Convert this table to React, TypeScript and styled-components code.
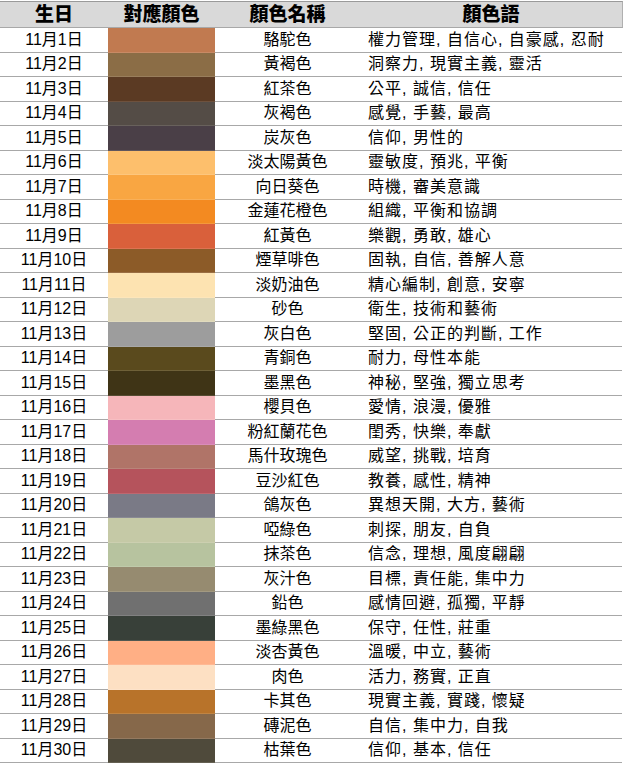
import React from "react";
import styled, { createGlobalStyle } from "styled-components";

const Global = createGlobalStyle`
  html, body { margin: 0; padding: 0; background: #ffffff; }
  body { font-family: "Liberation Sans", "Noto Sans CJK TC", sans-serif; color: #000; }
`;

type Row = { day: number; color: string; name: string; words: string };

const rows: Row[] = [
  { day: 1, color: "#c17a50", name: "駱駝色", words: "權力管理, 自信心, 自豪感, 忍耐" },
  { day: 2, color: "#8b6d46", name: "黃褐色", words: "洞察力, 現實主義, 靈活" },
  { day: 3, color: "#5b3a23", name: "紅茶色", words: "公平, 誠信, 信任" },
  { day: 4, color: "#544c46", name: "灰褐色", words: "感覺, 手藝, 最高" },
  { day: 5, color: "#4a3f47", name: "炭灰色", words: "信仰, 男性的" },
  { day: 6, color: "#fdbf6c", name: "淡太陽黃色", words: "靈敏度, 預兆, 平衡" },
  { day: 7, color: "#f9a642", name: "向日葵色", words: "時機, 審美意識" },
  { day: 8, color: "#f38a21", name: "金蓮花橙色", words: "組織, 平衡和協調" },
  { day: 9, color: "#d9603b", name: "紅黃色", words: "樂觀, 勇敢, 雄心" },
  { day: 10, color: "#8c5b28", name: "煙草啡色", words: "固執, 自信, 善解人意" },
  { day: 11, color: "#fde3b1", name: "淡奶油色", words: "精心編制, 創意, 安寧" },
  { day: 12, color: "#ddd6b6", name: "砂色", words: "衛生, 技術和藝術" },
  { day: 13, color: "#9d9d9d", name: "灰白色", words: "堅固, 公正的判斷, 工作" },
  { day: 14, color: "#5a4a1d", name: "青銅色", words: "耐力, 母性本能" },
  { day: 15, color: "#3f3416", name: "墨黑色", words: "神秘, 堅強, 獨立思考" },
  { day: 16, color: "#f6b6ba", name: "櫻貝色", words: "愛情, 浪漫, 優雅" },
  { day: 17, color: "#d47db0", name: "粉紅蘭花色", words: "閨秀, 快樂, 奉獻" },
  { day: 18, color: "#b07468", name: "馬什玫瑰色", words: "威望, 挑戰, 培育" },
  { day: 19, color: "#b5535c", name: "豆沙紅色", words: "教養, 感性, 精神" },
  { day: 20, color: "#7a7a86", name: "鴿灰色", words: "異想天開, 大方, 藝術" },
  { day: 21, color: "#c5c9a6", name: "啞綠色", words: "刺探, 朋友, 自負" },
  { day: 22, color: "#b7c39f", name: "抹茶色", words: "信念, 理想, 風度翩翩" },
  { day: 23, color: "#968b70", name: "灰汁色", words: "目標, 責任能, 集中力" },
  { day: 24, color: "#707070", name: "鉛色", words: "感情回避, 孤獨, 平靜" },
  { day: 25, color: "#384039", name: "墨綠黑色", words: "保守, 任性, 莊重" },
  { day: 26, color: "#ffaf85", name: "淡杏黃色", words: "溫暖, 中立, 藝術" },
  { day: 27, color: "#fde0c3", name: "肉色", words: "活力, 務實, 正直" },
  { day: 28, color: "#b8732a", name: "卡其色", words: "現實主義, 實踐, 懷疑" },
  { day: 29, color: "#86684a", name: "磚泥色", words: "自信, 集中力, 自我" },
  { day: 30, color: "#4f4a3b", name: "枯葉色", words: "信仰, 基本, 信任" },
];

const Table = styled.div`
  width: 623px;
  padding-top: 1px;
`;

const HeaderRow = styled.div`
  display: grid;
  grid-template-columns: 108px 107px 145px 262px;
  height: 27px;
  box-sizing: border-box;
  background: #d9d9d9;
  border-top: 1px solid #9a9a9a;
  border-bottom: 1px solid #a8a8a8;
  border-right: 1px solid #b0b0b0;
  width: 623px;
`;

const HeadCell = styled.div`
  display: flex;
  align-items: center;
  justify-content: center;
  font-size: 19px;
  font-weight: 900;
  line-height: 1;
`;

const BodyRow = styled.div`
  display: grid;
  grid-template-columns: 108px 107px 145px 262px;
  height: 24.5px;
  box-sizing: border-box;
  border-bottom: 1px solid #a8a8a8;
  width: 622px;
`;

const Cell = styled.div<{ $align?: "left" | "center" }>`
  display: flex;
  align-items: center;
  justify-content: ${(p) => (p.$align === "left" ? "flex-start" : "center")};
  padding-left: ${(p) => (p.$align === "left" ? "8px" : "0")};
  letter-spacing: ${(p) => (p.$align === "left" ? "1px" : "0")};
  font-size: 16px;
  line-height: 1;
  white-space: nowrap;
`;

const Swatch = styled.div<{ $color: string }>`
  background: ${(p) => p.$color};
  margin-bottom: -1px;
  box-shadow: inset 0 -1px 0 rgba(255, 255, 255, 0.12);
`;

export default function App() {
  return (
    <>
      <Global />
      <Table>
        <HeaderRow>
          <HeadCell>生日</HeadCell>
          <HeadCell>對應顏色</HeadCell>
          <HeadCell>顏色名稱</HeadCell>
          <HeadCell>顏色語</HeadCell>
        </HeaderRow>
        {rows.map((r) => (
          <BodyRow key={r.day}>
            <Cell>11月{r.day}日</Cell>
            <Swatch $color={r.color} />
            <Cell>{r.name}</Cell>
            <Cell $align="left">{r.words}</Cell>
          </BodyRow>
        ))}
      </Table>
    </>
  );
}
